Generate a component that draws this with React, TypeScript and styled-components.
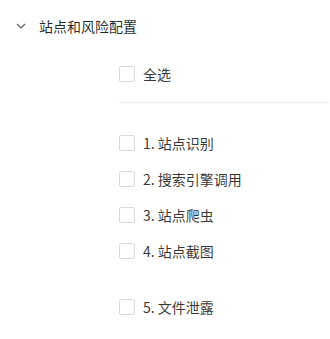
import React from 'react';
import styled, { createGlobalStyle } from 'styled-components';

const GlobalStyle = createGlobalStyle`
  body {
    margin: 0;
    background: #fff;
    font-family: "Noto Sans CJK SC", "Noto Sans", sans-serif;
    color: rgba(0, 0, 0, 0.85);
  }
`;

const Panel = styled.div`
  width: 330px;
  height: 339px;
  display: flex;
  flex-direction: column;
`;

const Header = styled.div`
  height: 52px;
  display: flex;
  align-items: center;
  padding-left: 16px;
  gap: 13px;
  font-size: 14px;
  color: rgba(0, 0, 0, 0.85);
  cursor: pointer;
  svg {
    flex-shrink: 0;
  }
`;

const Body = styled.div`
  padding-left: 119px;
  display: flex;
  flex-direction: column;
`;

const Row = styled.label<{ $extraTop?: number }>`
  display: flex;
  align-items: center;
  gap: 8px;
  height: 16px;
  margin-top: ${(p) => p.$extraTop ?? 0}px;
  font-size: 14px;
  line-height: 16px;
  color: rgba(0, 0, 0, 0.8);
  cursor: pointer;
  white-space: nowrap;
`;

const Box = styled.span`
  width: 16px;
  height: 16px;
  box-sizing: border-box;
  border: 1px solid #d9d9d9;
  border-radius: 2px;
  background: #fff;
  flex-shrink: 0;
`;

const Divider = styled.div`
  height: 1px;
  background: #ececec;
  margin-top: 20px;
  margin-right: 1px;
`;

const List = styled.div`
  display: flex;
  flex-direction: column;
  gap: 20px;
  margin-top: 32px;
`;

const items = [
  { label: '1. 站点识别' },
  { label: '2. 搜索引擎调用' },
  { label: '3. 站点爬虫' },
  { label: '4. 站点截图' },
  { label: '5. 文件泄露', extra: 20 },
];

export default function App() {
  return (
    <Panel>
      <GlobalStyle />
      <Header>
        <svg width="10" height="10" viewBox="0 0 10 10">
          <path d="M1 3 L5 7 L9 3" fill="none" stroke="#595959" strokeWidth="1.1" />
        </svg>
        <span>站点和风险配置</span>
      </Header>
      <Body>
        <Row $extraTop={14}>
          <Box />
          <span>全选</span>
        </Row>
        <Divider />
        <List>
          {items.map((item, index) => (
            <Row key={index} $extraTop={item.extra}>
              <Box />
              <span>{item.label}</span>
            </Row>
          ))}
        </List>
      </Body>
    </Panel>
  );
}
